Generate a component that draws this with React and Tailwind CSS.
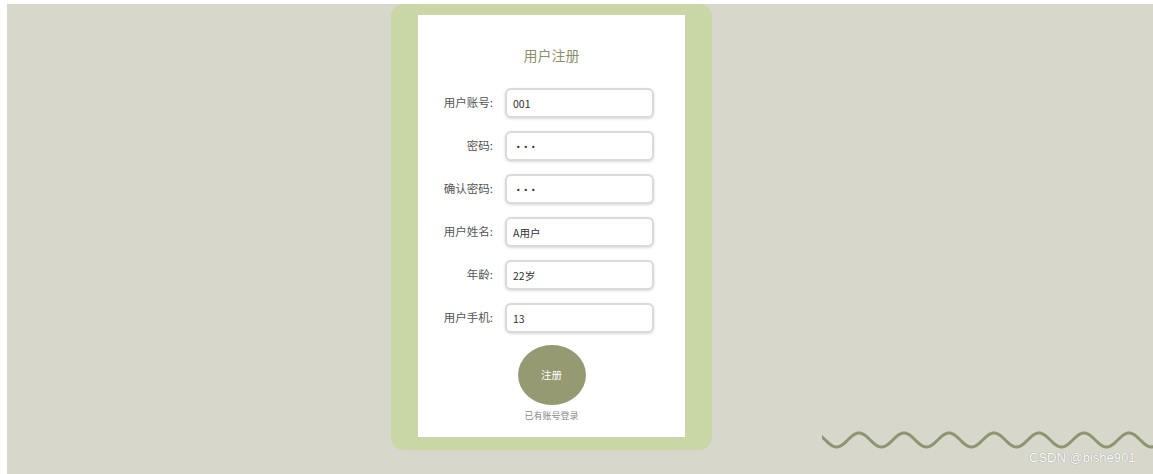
import React, { useState } from 'react';

const font = { fontFamily: '"Microsoft YaHei", "Noto Sans CJK SC", "Liberation Sans", sans-serif' };

// sine wave for the decoration in the bottom right corner
const wavePath = (() => {
  const pts = [];
  for (let x = 0; x <= 331; x += 1) {
    const y = 16 - 7 * Math.cos((2 * Math.PI * (x - 37)) / 45);
    pts.push(`${x === 0 ? 'M' : 'L'}${x} ${y.toFixed(2)}`);
  }
  return pts.join(' ');
})();

function Field({ label, value, type = 'text', onChange }) {
  return (
    <div className="flex items-center h-[30px]">
      <label className="w-[75px] text-right text-[11.5px] text-[#555]">{label}</label>
      <input
        type={type}
        value={value}
        onChange={onChange}
        className={
          'ml-[12px] w-[149px] h-[30px] rounded-[6px] border-2 border-[#dadada] bg-white px-[6px] text-[10.5px] text-[#333] outline-none shadow-[0_1px_3px_rgba(0,0,0,0.15)]' +
          (type === 'password' ? ' tracking-[-3px]' : '')
        }
        style={font}
      />
    </div>
  );
}

export default function App() {
  const [form, setForm] = useState({
    account: '001',
    password: '123',
    confirm: '123',
    name: 'A用户',
    age: '22岁',
    phone: '13',
  });

  const set = (k) => (e) => setForm({ ...form, [k]: e.target.value });

  return (
    <div className="w-[1153px] h-[474px] bg-white pt-[4px] pl-[7px] overflow-hidden" style={font}>
      <div className="relative w-[1146px] h-[470px] bg-[#d7d7cb]">
        <div className="ml-[384px] w-[321px] h-[446px] rounded-[13px] bg-[#c9d6a5] pt-[11px] px-[27px]">
          <div className="bg-white h-[422px] flex flex-col items-start">
            <h2 className="w-full text-center text-[14px] text-[#8b8f6a] mt-[30px] leading-[20px]">用户注册</h2>
            <div className="flex flex-col gap-[13px] mt-[23px]">
              <Field label="用户账号:" value={form.account} onChange={set('account')} />
              <Field label="密码:" type="password" value={form.password} onChange={set('password')} />
              <Field label="确认密码:" type="password" value={form.confirm} onChange={set('confirm')} />
              <Field label="用户姓名:" value={form.name} onChange={set('name')} />
              <Field label="年龄:" value={form.age} onChange={set('age')} />
              <Field label="用户手机:" value={form.phone} onChange={set('phone')} />
            </div>
            <div className="w-full flex flex-col items-center mt-[12px]">
              <button className="w-[68px] h-[60px] rounded-[50%] bg-[#959a72] text-white text-[10.5px]">
                注册
              </button>
              <a href="#" className="mt-[5px] text-[9px] text-[#8a8a8a] leading-[12px]">已有账号登录</a>
            </div>
          </div>
        </div>

        <svg
          className="absolute left-[815px] top-[420px]"
          width="331"
          height="26"
          viewBox="0 0 331 26"
        >
          <path d={wavePath} fill="none" stroke="#8e9670" strokeWidth="3" strokeLinecap="round" />
        </svg>

        <div
          className="absolute left-[1022px] top-[444px] text-[13px] text-white"
          style={{ fontFamily: '"Liberation Sans", Arial, sans-serif', textShadow: '0 0 1px #777' }}
        >
          CSDN @bishe901
        </div>
      </div>
    </div>
  );
}
